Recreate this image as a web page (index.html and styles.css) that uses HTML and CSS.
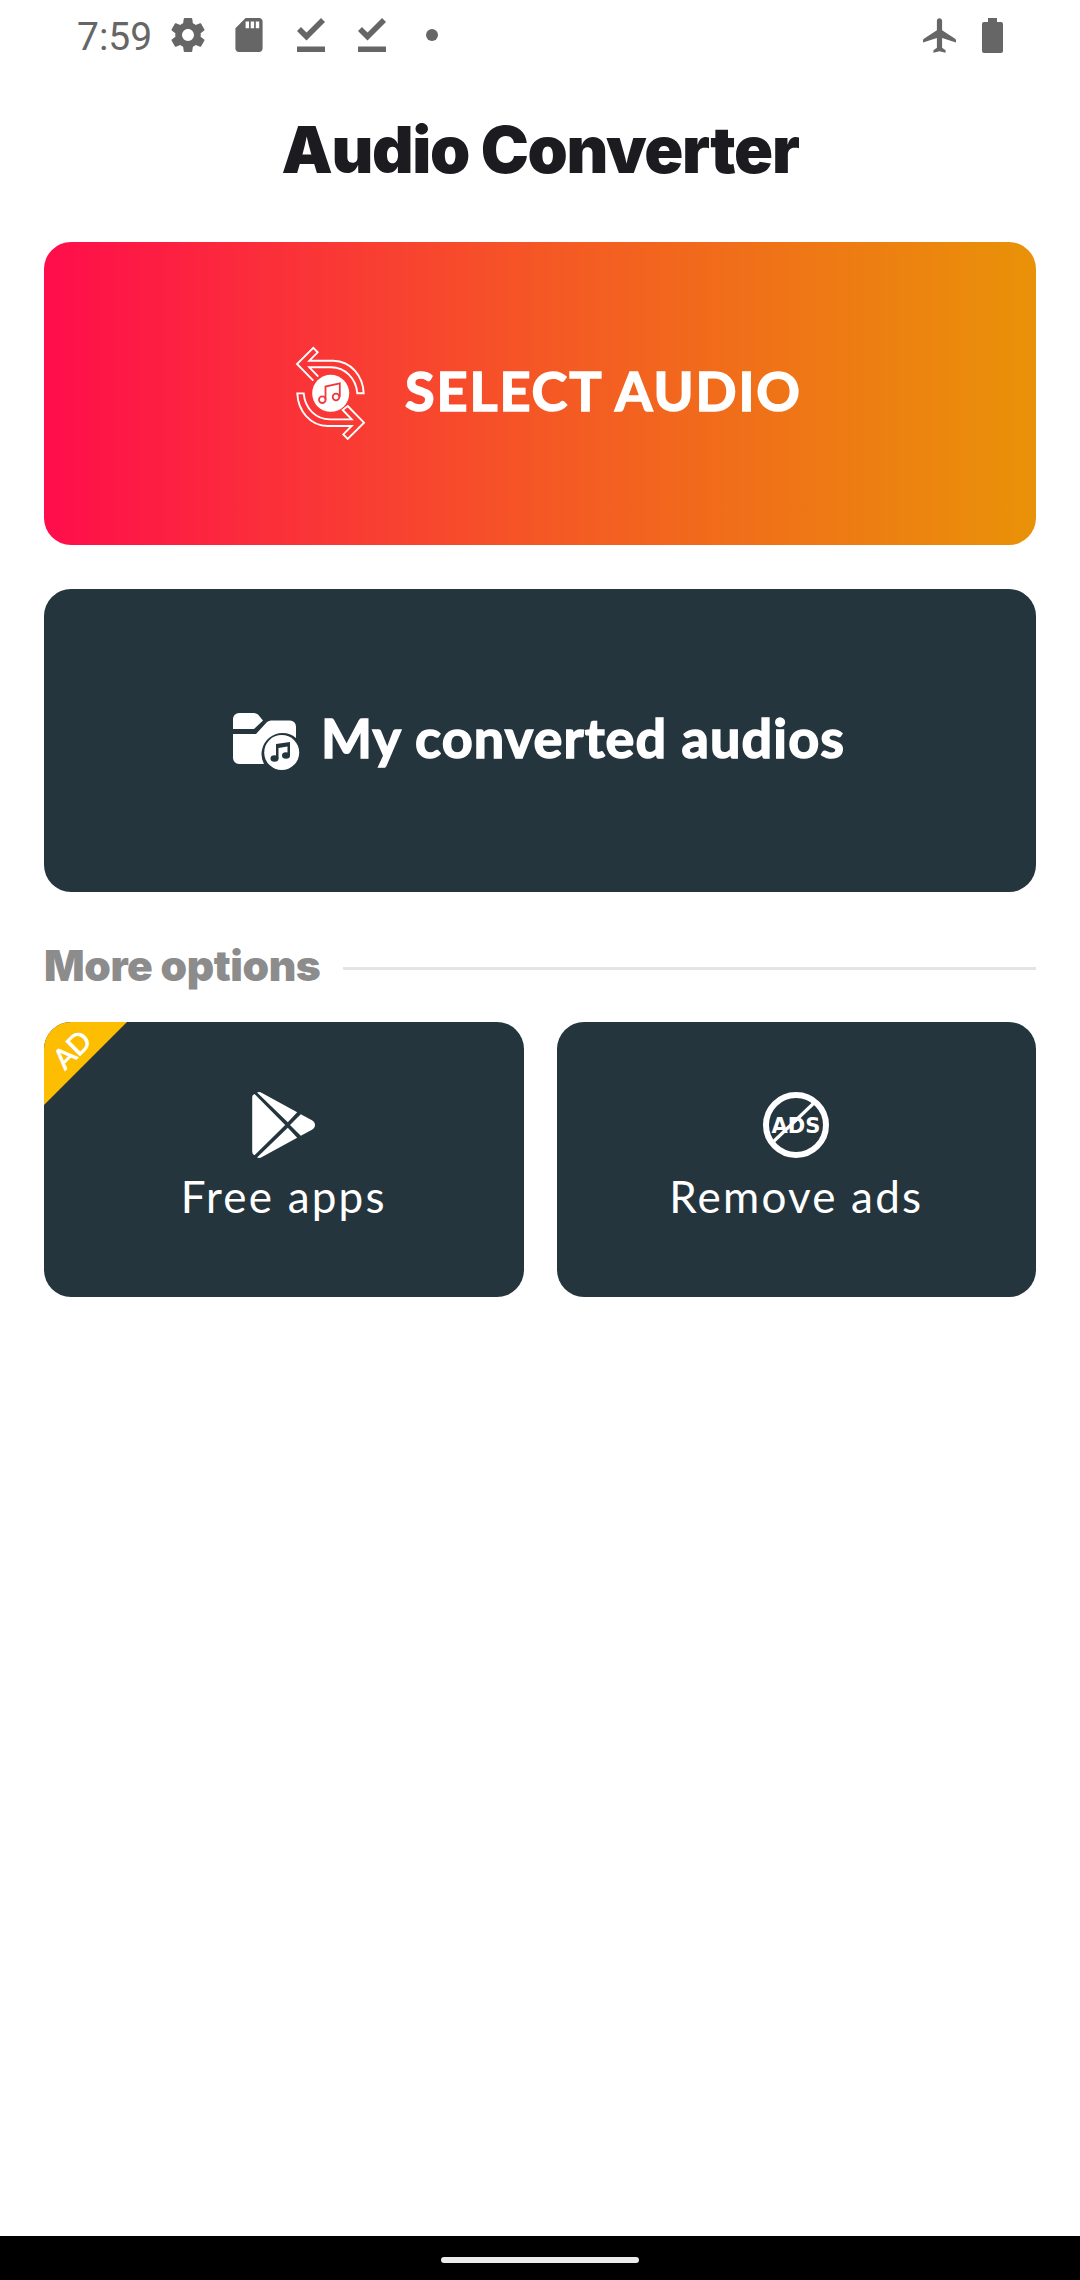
FILE: index.html
```
<!DOCTYPE html>
<html lang="en">

<head>
    <meta charset="UTF-8">
    <meta name="viewport" content="width=device-width, initial-scale=1.0">
    <title>Audio Converter</title>
    <link rel="stylesheet" href="styles.css">
</head>

<body>
    <header class="status-bar">
        <span class="time">7:59</span>
        <svg class="icon-gear" viewBox="2 2 20 20"><path d="M19.430 12.980c.04-.32.07-.64.07-.98s-.03-.66-.07-.98l2.110-1.650c.19-.15.24-.42.12-.64l-2-3.460c-.12-.22-.39-.3-.61-.22l-2.490 1c-.52-.4-1.080-.73-1.690-.98l-.38-2.650C14.460 2.180 14.250 2 14 2h-4c-.25 0-.46.18-.49.42l-.38 2.650c-.61.25-1.170.59-1.690.98l-2.490-1c-.23-.09-.49 0-.61.22l-2 3.460c-.13.22-.07.49.12.64l2.110 1.650c-.04.32-.07.65-.07.98s.03.66.07.98l-2.110 1.650c-.19.15-.24.42-.12.64l2 3.460c.12.22.39.3.61.22l2.490-1c.52.4 1.080.73 1.690.98l.38 2.650c.03.24.24.42.49.42h4c.25 0 .46-.18.49-.42l.38-2.650c.61-.25 1.170-.59 1.690-.98l2.490 1c.23.09.49 0 .61-.22l2-3.460c.12-.22.07-.49-.12-.64l-2.110-1.650zM12 15.500c-1.930 0-3.500-1.570-3.500-3.500s1.570-3.500 3.500-3.500 3.500 1.570 3.500 3.500-1.570 3.500-3.500 3.500z"/></svg>
        <svg class="icon-sd" viewBox="4 2 16 20"><path d="M18 2h-8L4 8v12c0 1.100.9 2 2 2h12c1.100 0 2-.9 2-2V4c0-1.100-.9-2-2-2zm-6 6h-2V4h2v4zm3 0h-2V4h2v4zm3 0h-2V4h2v4z"/></svg>
        <svg class="icon-done" viewBox="0 0 28 34"><path d="M0 28.500h28V34H0zM0 13l4-4 5.500 5.500L24 0l4 4L9.500 22.500z"/></svg>
        <svg class="icon-done" viewBox="0 0 28 34"><path d="M0 28.500h28V34H0zM0 13l4-4 5.500 5.500L24 0l4 4L9.500 22.500z"/></svg>
        <span class="dot"></span>
        <div class="system-icons">
            <svg class="icon-plane" viewBox="2.500 2 19 20"><path d="M21.500 16v-1.200q0-.6-.5-.9L13.500 9V3.500c0-.83-.67-1.500-1.500-1.500s-1.500.67-1.500 1.500V9L3 13.900q-.5.3-.5.9V16l8-2.500V19L8.500 20.500V22l3.500-1 3.500 1v-1.500L13.500 19v-5.500z"/></svg>
            <svg class="icon-battery" viewBox="0 0 21 35"><path d="M6 0h9v4h4a2 2 0 0 1 2 2v27a2 2 0 0 1-2 2H2a2 2 0 0 1-2-2V6a2 2 0 0 1 2-2h4z"/></svg>
        </div>
    </header>

    <h1 class="title">Audio Converter</h1>

    <main class="content">
        <button class="card card-select">
            <svg class="icon-convert" viewBox="0 0 69 93">
                <g fill="none" stroke="#fff" stroke-width="1.900">
                    <path d="M17.300 33.700 1 17 17.300.8l4.400 4.500-8.400 8.400h24C55 14 67 29 67.700 46.300h-6.400C60 31 49 20.500 35 20.300H13.300l9 9.400"/>
                    <path d="M51.700 59 68 75.700 51.700 91.900l-4.400-4.500 8.400-8.400h-24C14 78.700 2 63.700 1.300 46.400h6.400C9 61.700 20 72.200 34 72.400h21.700l-9-9.400z"/>
                </g>
                <circle cx="34.700" cy="46.300" r="18.500" fill="#fff"/>
                <g fill="none" stroke="#f2383c" stroke-width="1.800">
                    <circle cx="26.300" cy="52.700" r="3.300"/>
                    <circle cx="40" cy="50" r="3.300"/>
                    <path d="M29.500 52.500V39.500L43.800 36.300V50"/>
                </g>
            </svg>
            <span>SELECT AUDIO</span>
        </button>
        <button class="card card-converted">
            <svg class="icon-folder" viewBox="0 0 66 57">
                <path fill="#fff" d="M0 16V6a6 6 0 0 1 6-6h15q2 0 4 1.500l5 6L21 16zM0 21h23L34 9q2-1.500 4-1.500h19a6 6 0 0 1 6 6V25A21 21 0 0 0 31 51H6a6 6 0 0 1-6-6z"/>
                <circle cx="48.700" cy="39.500" r="17.500" fill="#fff"/>
                <g fill="#25353d">
                    <ellipse cx="41.500" cy="45.500" rx="4" ry="3.300"/>
                    <ellipse cx="53" cy="42.500" rx="4" ry="3.300"/>
                    <path d="M43 31 57 29v13.500h-2.500V33.500l-9 1.500v10.500H43z"/>
                </g>
            </svg>
            <span>My converted audios</span>
        </button>

        <div class="section-title">
            <h2>More options</h2>
            <span class="line"></span>
        </div>

        <div class="options">
            <button class="option">
                <svg class="icon-option" viewBox="-1 0 66 66">
                    <g fill="#fff">
                        <path d="M.2 59.700V5q0-2 2.300-3L33.200 33 2.500 63.300Q.2 62 .2 59.700z"/>
                        <path d="M5 .5Q7.500-.5 10 1l35.200 19.300-9.400 10z"/>
                        <path d="M5 65.500q2.500 1 5-.5l35.200-19.300-9.400-10z"/>
                        <path d="M48.800 22.300 59.500 28q3.500 2 3.500 5t-3.500 5l-10.700 5.700L38 33z"/>
                    </g>
                </svg>
                <span class="option-label">Free apps</span>
                <span class="ad-badge"><span class="ad-text">AD</span></span>
            </button>
            <button class="option">
                <svg class="icon-option" viewBox="0 0 66 66">
                    <circle cx="33" cy="33" r="30" fill="none" stroke="#fff" stroke-width="6"/>
                    <text class="ads-text" x="33" y="40.700" text-anchor="middle">ADS</text>
                    <path stroke="#fff" stroke-width="3.200" d="M52 10 10 50"/>
                </svg>
                <span class="option-label">Remove ads</span>
            </button>
        </div>
    </main>

    <footer class="nav-bar"><span class="nav-handle"></span></footer>
</body>

</html>
```
FILE: styles.css
```
* {
    box-sizing: border-box;
    margin: 0;
    padding: 0;
}

body {
    font-family: 'Lato', sans-serif;
    background-color: #fff;
    height: 100vh;
    display: flex;
    flex-direction: column;
}

svg {
    display: block;
    flex-shrink: 0;
    overflow: visible;
}

button {
    border: none;
    font-family: inherit;
    color: #fff;
    cursor: pointer;
}

.status-bar {
    height: 70px;
    padding: 0 77px;
    display: flex;
    align-items: center;
    fill: #666;
    color: #666;
}

.time {
    font-family: 'Roboto', sans-serif;
    font-size: 39px;
    width: 94px;
    padding-top: 3px;
}

.icon-gear {
    width: 34px;
    height: 34px;
    margin-right: 30px;
}

.icon-sd {
    width: 28px;
    height: 34px;
    margin-right: 34px;
}

.icon-done {
    width: 28px;
    height: 34px;
    margin-right: 33px;
}

.dot {
    width: 12px;
    height: 12px;
    border-radius: 50%;
    background-color: #666;
    margin-left: 7px;
}

.system-icons {
    display: flex;
    gap: 26px;
    margin-left: auto;
}

.icon-plane {
    width: 33px;
    height: 35px;
}

.icon-battery {
    width: 21px;
    height: 35px;
}

.title {
    height: 172px;
    line-height: 161px;
    text-align: center;
    font-family: 'Inter', sans-serif;
    font-size: 64.5px;
    font-weight: 900;
    letter-spacing: -1.3px;
    color: #1c1b1f;
}

.content {
    flex: 1;
    padding: 0 44px;
}

.card {
    width: 100%;
    height: 303px;
    margin-bottom: 44px;
    border-radius: 27px;
    display: flex;
    align-items: center;
    font-size: 54px;
    font-weight: 700;
    -webkit-text-stroke: 1.5px #fff;
}

.card span {
    padding-bottom: 7px;
}

.card-select {
    padding-left: 252px;
    letter-spacing: 1.9px;
    background: linear-gradient(to right, #ff0d4b, #f55725 50%, #e99208);
}

.card-converted {
    padding-left: 189px;
    letter-spacing: 1.1px;
    background-color: #25353d;
}

.icon-convert {
    width: 69px;
    height: 93px;
    margin-right: 40px;
}

.icon-folder {
    width: 66px;
    height: 57px;
    margin-top: 2px;
    margin-right: 22px;
}

.section-title {
    height: 86px;
    padding-bottom: 27px;
    display: flex;
    align-items: center;
    gap: 23px;
}

.section-title h2 {
    font-family: 'Inter', sans-serif;
    font-size: 42.5px;
    font-weight: 900;
    letter-spacing: -0.4px;
    color: #8c8c8c;
}

.line {
    flex: 1;
    height: 3px;
    margin-top: 6px;
    background-color: #e4e4e4;
}

.options {
    display: grid;
    grid-template-columns: 1fr 1fr;
    gap: 33px;
}

.option {
    position: relative;
    overflow: hidden;
    height: 275px;
    border-radius: 27px;
    background-color: #25353d;
    display: flex;
    flex-direction: column;
    align-items: center;
    font-size: 44px;
    letter-spacing: 2.2px;
    padding-top: 70px;
}

.option-label {
    margin-top: 12px;
}

.icon-option {
    width: 66px;
    height: 66px;
}

.ads-text {
    font: 700 21px 'DejaVu Sans', sans-serif;
    letter-spacing: 0;
    fill: #fff;
}

.ad-badge {
    position: absolute;
    top: 0;
    left: 0;
    width: 83px;
    height: 83px;
    background-color: #fdbd00;
    clip-path: polygon(0 0, 100% 0, 0 100%);
}

.ad-text {
    display: flex;
    align-items: center;
    justify-content: center;
    width: 54px;
    height: 53px;
    font-size: 28px;
    letter-spacing: 0;
    -webkit-text-stroke: 0.8px #fff;
    transform: rotate(-45deg);
}

.nav-bar {
    height: 44px;
    padding-top: 4px;
    background-color: #000;
    display: flex;
    align-items: center;
    justify-content: center;
}

.nav-handle {
    width: 198px;
    height: 6px;
    border-radius: 3px;
    background-color: #ececec;
}
```
